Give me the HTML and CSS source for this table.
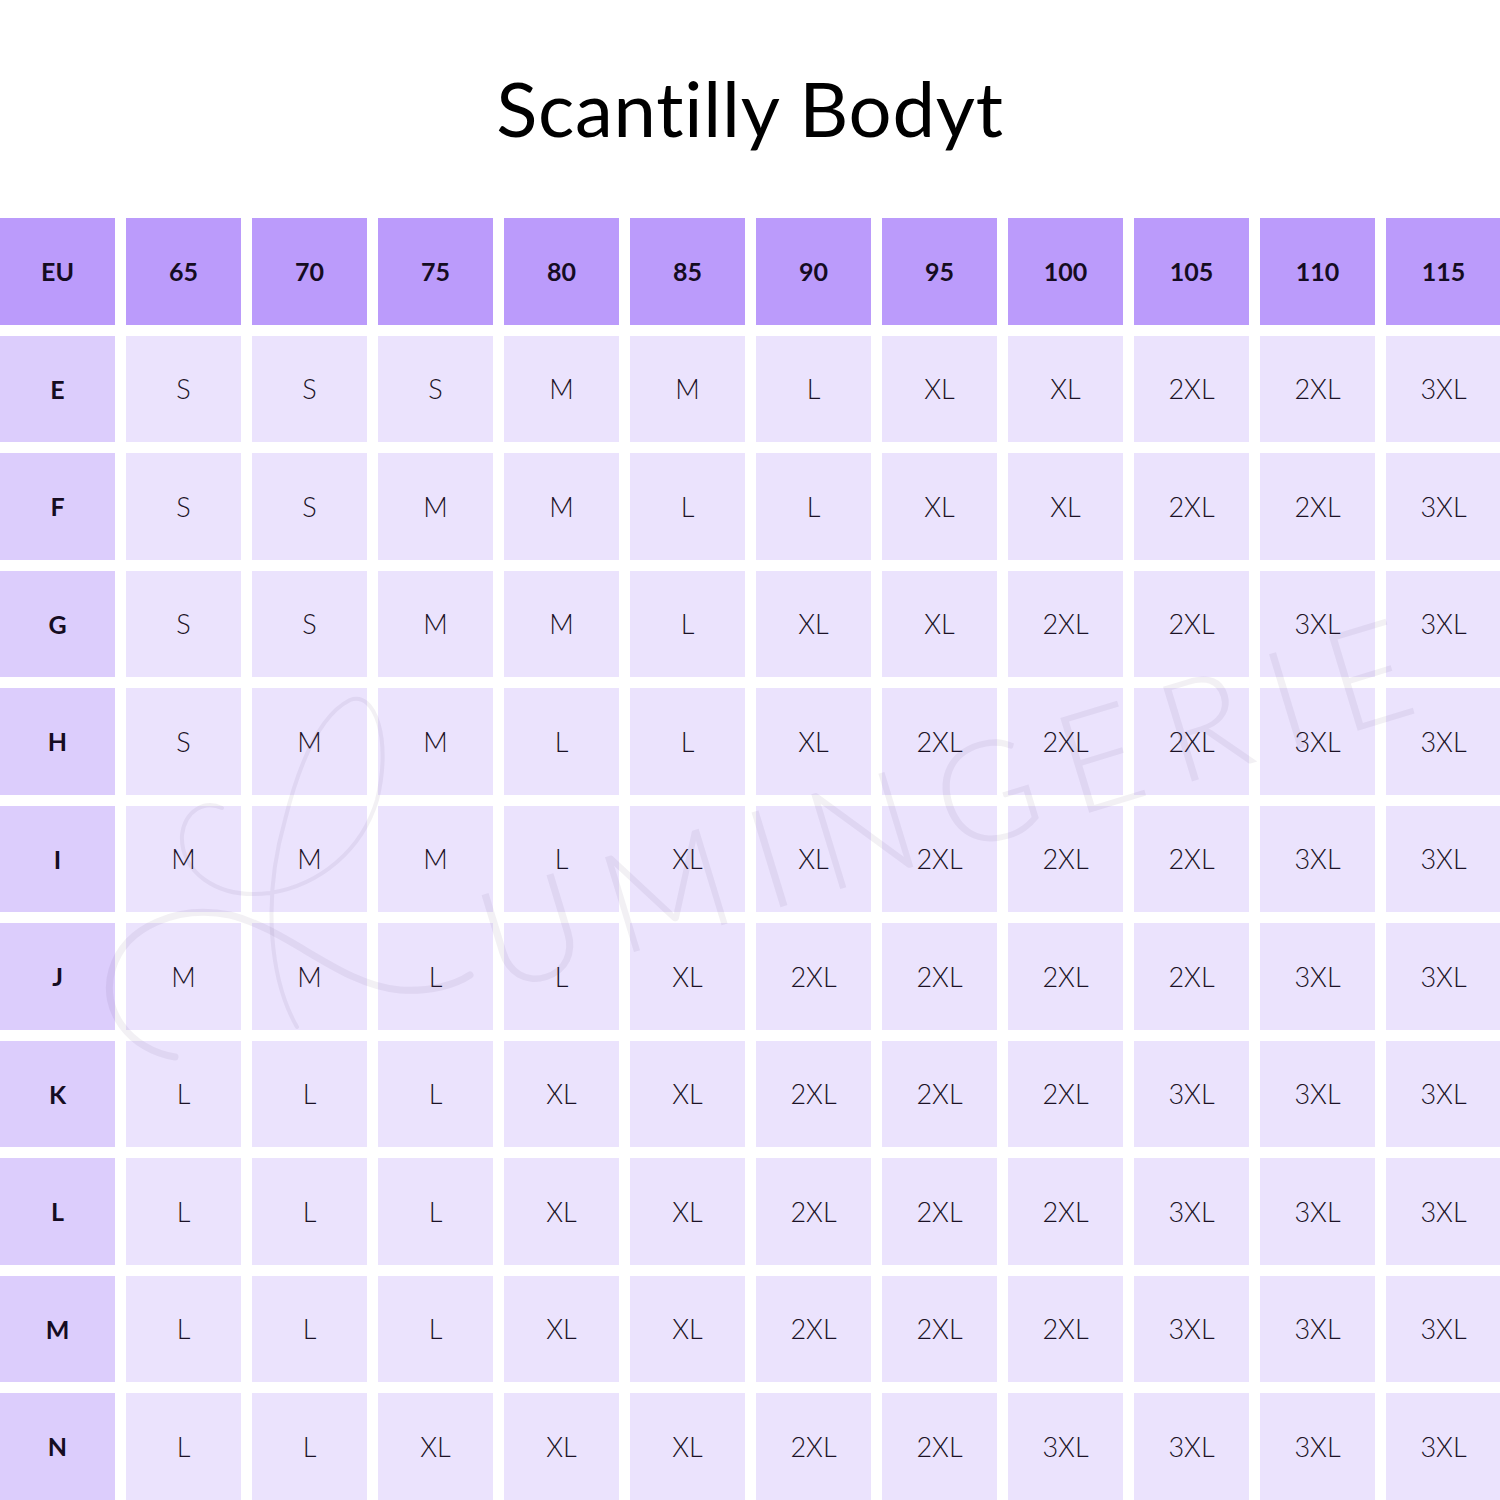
FILE: index.html
```html
<!DOCTYPE html>
<html>
<head>
<meta charset="utf-8">
<link rel="stylesheet" href="styles.css">
</head>
<body>
<div class="page">
  <header class="title-wrap"><h1 class="title">Scantilly Bodyt</h1></header>
  <div class="grid">
    <div class="cell head">EU</div><div class="cell head">65</div><div class="cell head">70</div><div class="cell head">75</div><div class="cell head">80</div><div class="cell head">85</div><div class="cell head">90</div><div class="cell head">95</div><div class="cell head">100</div><div class="cell head">105</div><div class="cell head">110</div><div class="cell head">115</div>

    <div class="cell side">E</div><div class="cell">S</div><div class="cell">S</div><div class="cell">S</div><div class="cell">M</div><div class="cell">M</div><div class="cell">L</div><div class="cell">XL</div><div class="cell">XL</div><div class="cell">2XL</div><div class="cell">2XL</div><div class="cell">3XL</div>

    <div class="cell side">F</div><div class="cell">S</div><div class="cell">S</div><div class="cell">M</div><div class="cell">M</div><div class="cell">L</div><div class="cell">L</div><div class="cell">XL</div><div class="cell">XL</div><div class="cell">2XL</div><div class="cell">2XL</div><div class="cell">3XL</div>

    <div class="cell side">G</div><div class="cell">S</div><div class="cell">S</div><div class="cell">M</div><div class="cell">M</div><div class="cell">L</div><div class="cell">XL</div><div class="cell">XL</div><div class="cell">2XL</div><div class="cell">2XL</div><div class="cell">3XL</div><div class="cell">3XL</div>

    <div class="cell side">H</div><div class="cell">S</div><div class="cell">M</div><div class="cell">M</div><div class="cell">L</div><div class="cell">L</div><div class="cell">XL</div><div class="cell">2XL</div><div class="cell">2XL</div><div class="cell">2XL</div><div class="cell">3XL</div><div class="cell">3XL</div>

    <div class="cell side">I</div><div class="cell">M</div><div class="cell">M</div><div class="cell">M</div><div class="cell">L</div><div class="cell">XL</div><div class="cell">XL</div><div class="cell">2XL</div><div class="cell">2XL</div><div class="cell">2XL</div><div class="cell">3XL</div><div class="cell">3XL</div>

    <div class="cell side">J</div><div class="cell">M</div><div class="cell">M</div><div class="cell">L</div><div class="cell">L</div><div class="cell">XL</div><div class="cell">2XL</div><div class="cell">2XL</div><div class="cell">2XL</div><div class="cell">2XL</div><div class="cell">3XL</div><div class="cell">3XL</div>

    <div class="cell side">K</div><div class="cell">L</div><div class="cell">L</div><div class="cell">L</div><div class="cell">XL</div><div class="cell">XL</div><div class="cell">2XL</div><div class="cell">2XL</div><div class="cell">2XL</div><div class="cell">3XL</div><div class="cell">3XL</div><div class="cell">3XL</div>

    <div class="cell side">L</div><div class="cell">L</div><div class="cell">L</div><div class="cell">L</div><div class="cell">XL</div><div class="cell">XL</div><div class="cell">2XL</div><div class="cell">2XL</div><div class="cell">2XL</div><div class="cell">3XL</div><div class="cell">3XL</div><div class="cell">3XL</div>

    <div class="cell side">M</div><div class="cell">L</div><div class="cell">L</div><div class="cell">L</div><div class="cell">XL</div><div class="cell">XL</div><div class="cell">2XL</div><div class="cell">2XL</div><div class="cell">2XL</div><div class="cell">3XL</div><div class="cell">3XL</div><div class="cell">3XL</div>

    <div class="cell side">N</div><div class="cell">L</div><div class="cell">L</div><div class="cell">XL</div><div class="cell">XL</div><div class="cell">XL</div><div class="cell">2XL</div><div class="cell">2XL</div><div class="cell">3XL</div><div class="cell">3XL</div><div class="cell">3XL</div><div class="cell">3XL</div>
  </div>
  <svg class="wm-mark" viewBox="0 0 1500 1500" aria-hidden="true">
    <path class="wm-thin" d="M297 1027 C270 980 262 900 285 820 C300 760 320 715 350 700 C375 690 392 740 377 800 C362 850 320 885 270 893 C215 900 180 870 182 835 C185 810 205 800 222 808"/>
    <path class="wm-thick" d="M175 1057 C130 1050 100 1010 112 970 C125 925 180 905 230 915 C290 930 340 985 400 990 C430 992 455 985 470 975"/>
  </svg>
  <div class="wm-text" aria-hidden="true">UMINGERIE</div>
</div>
</body>
</html>
```

FILE: styles.css
```css
html, body {
  margin: 0;
  padding: 0;
  background: #ffffff;
}
body {
  overflow: hidden;
}
.page {
  position: relative;
  width: 1500px;
  height: 1500px;
  overflow: hidden;
  font-family: "Lato", "Noto Sans", sans-serif;
  color: #1b1226;
}
.title-wrap {
  height: 218px;
  display: flex;
  align-items: center;
  justify-content: center;
}
.title {
  margin: 0;
  margin-top: -4px;
  font-family: "Lato", sans-serif;
  font-weight: 400;
  font-size: 76px;
  letter-spacing: 0.8px;
  color: #000000;
}
.grid {
  display: grid;
  grid-template-columns: repeat(12, 115px);
  grid-auto-rows: 106.5px;
  column-gap: 11px;
  row-gap: 11px;
  width: 1501px;
}
.cell {
  display: flex;
  align-items: center;
  justify-content: center;
  background: #ebe3fd;
  font-size: 27px;
  font-weight: 300;
  color: #1b1226;
}
.head {
  background: #bb9bfb;
  font-weight: 700;
  font-size: 25px;
  color: #150c22;
}
.side {
  background: #dccdfc;
  font-weight: 700;
  font-size: 25px;
  color: #150c22;
}
.wm-mark {
  position: absolute;
  left: 0;
  top: 0;
  width: 1500px;
  height: 1500px;
  pointer-events: none;
  fill: none;
  stroke: rgba(90, 70, 110, 0.08);
  stroke-linecap: round;
}
.wm-thin {
  stroke-width: 4;
}
.wm-thick {
  stroke-width: 7;
}
.wm-text {
  position: absolute;
  left: 482px;
  top: 872px;
  transform: rotate(-17deg);
  transform-origin: left center;
  pointer-events: none;
  color: rgba(90, 70, 110, 0.08);
  white-space: nowrap;
  font-family: "Lato", sans-serif;
  font-weight: 300;
  font-size: 140px;
  letter-spacing: 26px;
  line-height: 1;
}
```
